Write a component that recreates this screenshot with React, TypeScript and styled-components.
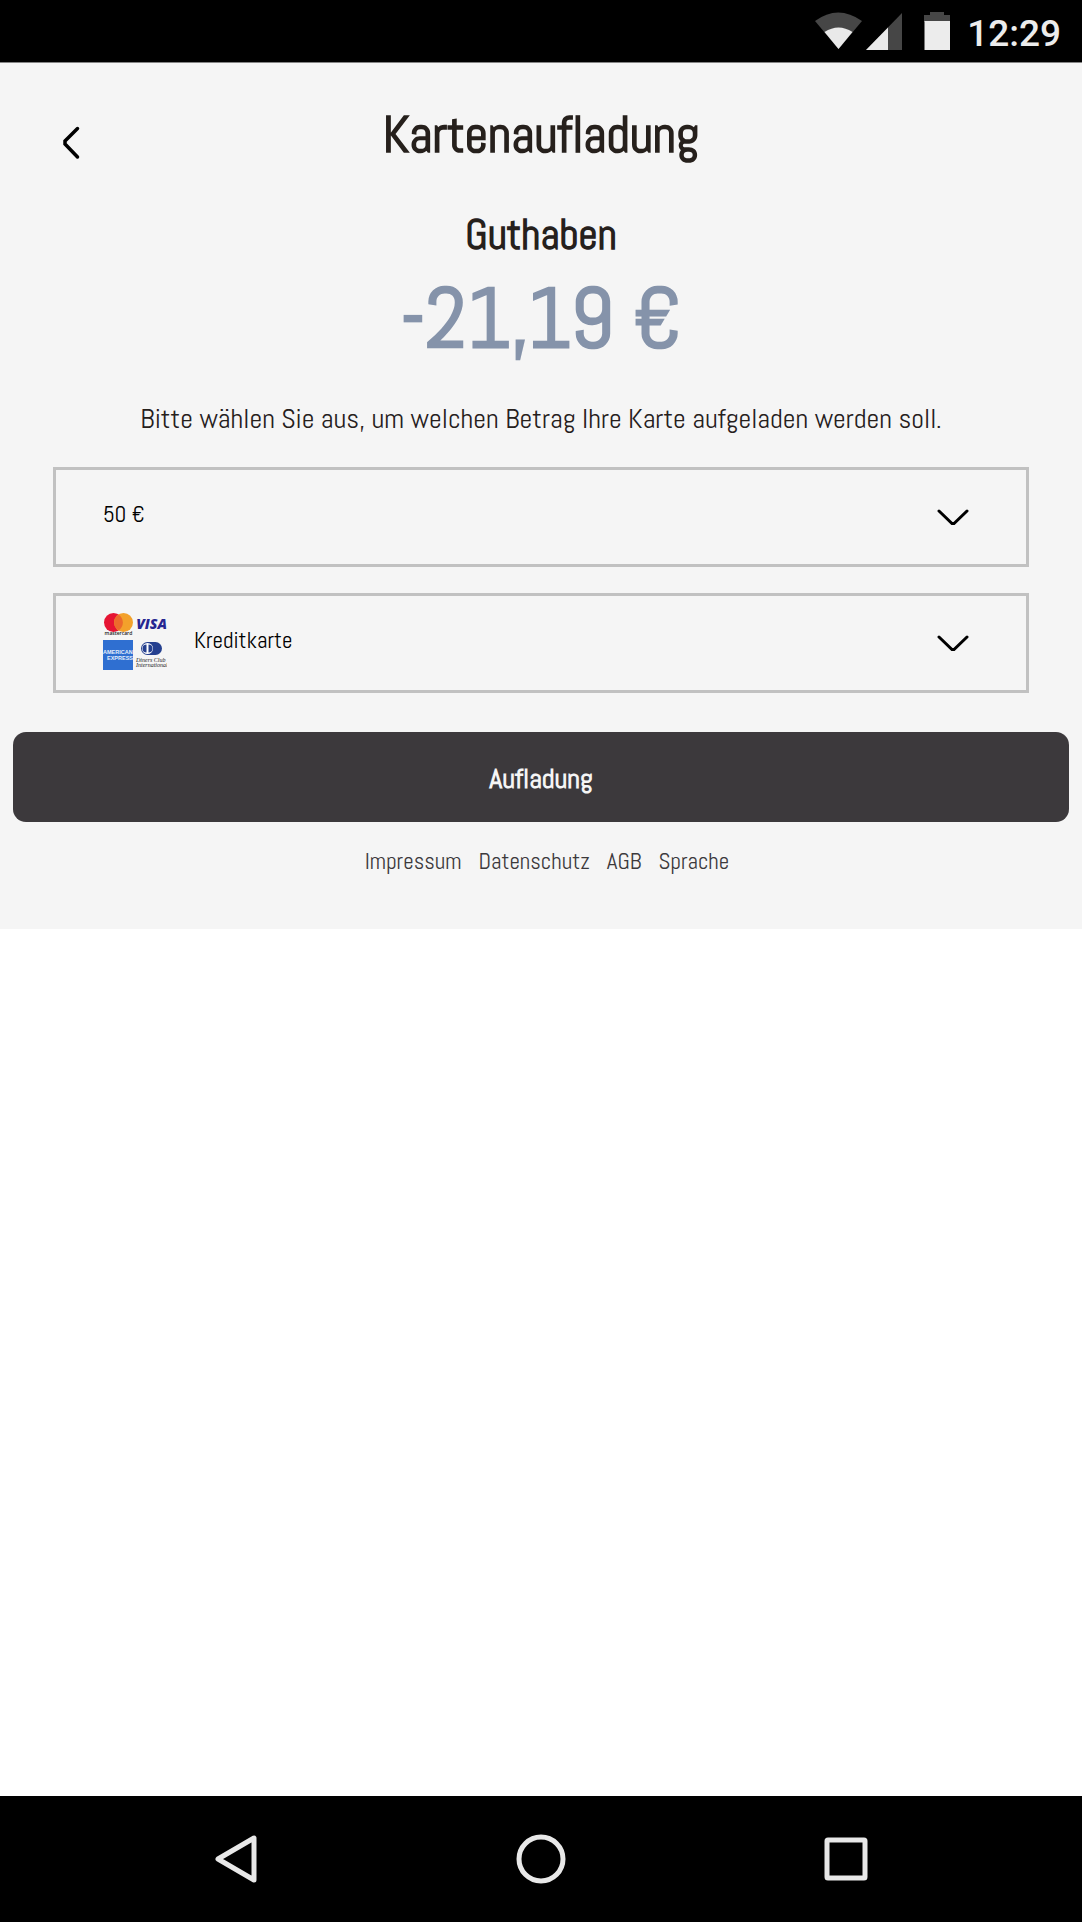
import React, { useState } from "react";
import styled, { createGlobalStyle } from "styled-components";

const GlobalStyle = createGlobalStyle`
  * { box-sizing: border-box; }
  body {
    margin: 0;
    background: #ffffff;
    font-family: "Abel", "Liberation Sans Narrow", "Roboto Condensed", "Roboto", sans-serif;
  }
  h1, h2, p { margin: 0; font-weight: 400; }
  button, select { font-family: inherit; }
`;

const Page = styled.div`
  display: flex;
  flex-direction: column;
  min-height: 100vh;
`;

const StatusBar = styled.div`
  display: flex;
  align-items: center;
  justify-content: flex-end;
  height: 63px;
  padding: 0 21px 0 0;
  background: #000000;
  border-bottom: 1px solid #858585;
`;

const Clock = styled.time`
  margin-left: 16px;
  padding-top: 6px;
  color: #ececec;
  font: 500 37px/44px "Roboto", sans-serif;
`;

const Panel = styled.main`
  display: flex;
  flex-direction: column;
  padding: 42px 13px 52px;
  background: #f5f5f5;
  color: #26201c;
  text-align: center;
`;

const Header = styled.header`
  display: grid;
  grid-template-columns: 80px 1fr 80px;
  align-items: end;
`;

const BackButton = styled.button`
  display: flex;
  align-items: center;
  justify-content: flex-start;
  height: 44px;
  padding: 0 0 0 50px;
  border: 0;
  background: none;
`;

const Title = styled.h1`
  font-size: 51px;
  font-weight: 700;
  line-height: 60px;
`;

const Subtitle = styled.h2`
  margin-top: 44px;
  font-size: 42px;
  font-weight: 700;
  line-height: 52px;
`;

const Amount = styled.p`
  margin-top: 7px;
  color: #8593aa;
  font-size: 85px;
  font-weight: 700;
  line-height: 100px;
`;

const Prompt = styled.p`
  margin-top: 31px;
  font-size: 28px;
  line-height: 40px;
`;

const Fields = styled.div`
  display: flex;
  flex-direction: column;
  gap: 26px;
  margin: 28px 40px 0;
`;

const Field = styled.div`
  position: relative;
  height: 100px;
`;

const Select = styled.select<{ $indent: number }>`
  width: 100%;
  height: 100%;
  padding: 0 120px 6px ${(p) => p.$indent}px;
  appearance: none;
  border: 3px solid #c1c1c1;
  border-radius: 0;
  background: #f5f5f5;
  color: #000000;
  font-size: 23px;
`;

const FieldArrow = styled.span`
  position: absolute;
  top: 42px;
  right: 60px;
  display: flex;
  pointer-events: none;
`;

const FieldIcon = styled.span`
  position: absolute;
  top: 20px;
  left: 50px;
  display: flex;
  pointer-events: none;
`;

const Submit = styled.button`
  height: 90px;
  margin-top: 39px;
  padding: 3px 0 0;
  border: 0;
  border-radius: 13px;
  background: #3c393c;
  color: #f5f5f5;
  font-size: 28px;
  font-weight: 700;
  line-height: 40px;
`;

const Footer = styled.footer`
  display: flex;
  justify-content: center;
  gap: 17px;
  margin-top: 23px;
  padding-left: 12px;
`;

const FooterLink = styled.a`
  color: #3c393c;
  font-size: 23px;
  line-height: 32px;
  text-decoration: none;
`;

const NavBar = styled.nav`
  display: flex;
  align-items: center;
  justify-content: center;
  gap: 245px;
  height: 126px;
  margin-top: auto;
  background: #000000;
`;

const NavButton = styled.button`
  display: flex;
  align-items: center;
  justify-content: center;
  width: 60px;
  height: 60px;
  padding: 0;
  border: 0;
  background: none;
`;

const StatusIcons = () => (
  <svg width="136" height="40" viewBox="0 0 136 40" aria-hidden="true">
    <path d="M0 10Q23 -7 47 10L23.500 38Z" fill="#464646" />
    <path d="M9.500 21Q23.500 12 37.500 21L23.500 38Z" fill="#e9e9e9" />
    <path d="M87 2V39H51Z" fill="#464646" />
    <path d="M73 16.500V39H51Z" fill="#e9e9e9" />
    <path d="M115 1H129V4H135V11H109V4H115Z" fill="#464646" />
    <path d="M109.500 10H135V39H109.500Z" fill="#ececec" />
  </svg>
);

const ArrowDown = () => (
  <svg width="32" height="17" viewBox="0 0 32 17" fill="none" aria-hidden="true">
    <path d="M2 2L15 14.500H17L30 2" stroke="#000" strokeWidth="3" strokeLinecap="round" />
  </svg>
);

const CardBrands = () => (
  <svg width="64" height="58" viewBox="0 0 64 58" aria-hidden="true">
    <circle cx="10.500" cy="9.500" r="9.500" fill="#e61433" />
    <circle cx="20.500" cy="9.500" r="9.500" fill="#f3a12b" />
    <path d="M15.500 1.500A9.500 9.500 0 0 1 15.500 17.500A9.500 9.500 0 0 1 15.500 1.500Z" fill="#ec6a2c" />
    <text x="15.500" y="22" fontSize="5" fontWeight="600" fontFamily="Open Sans, sans-serif" textAnchor="middle" fill="#222">mastercard</text>
    <text x="48.500" y="16" fontSize="14" fontWeight="800" fontStyle="italic" fontFamily="Open Sans, sans-serif" textAnchor="middle" fill="#262691">VISA</text>
    <rect x="0" y="27" width="30" height="30" fill="#2f6fd1" />
    <g fill="#e4eefb" fontFamily="Liberation Sans, sans-serif" fontWeight="700" fontSize="5.500">
      <text x="0" y="41">AMERICAN</text>
      <text x="30" y="47" textAnchor="end">EXPRESS</text>
    </g>
    <rect x="38" y="29" width="21" height="13" rx="6.500" fill="#25408f" />
    <circle cx="44.500" cy="35.500" r="5.500" fill="#fff" />
    <path d="M43.500 31.500A4 4 0 0 0 43.500 39.500ZM45.500 31.500A4 4 0 0 1 45.500 39.500Z" fill="#25408f" />
    <g fill="#222" fontFamily="Liberation Serif, serif" fontStyle="italic" fontSize="6">
      <text x="33" y="49">Diners Club</text>
      <text x="33" y="54">International</text>
    </g>
  </svg>
);

export default function App() {
  const [amount, setAmount] = useState("50 €");
  const [method, setMethod] = useState("Kreditkarte");

  return (
    <>
      <GlobalStyle />
      <Page>
        <StatusBar>
          <StatusIcons />
          <Clock>12:29</Clock>
        </StatusBar>

        <Panel>
          <Header>
            <BackButton type="button" aria-label="Zurück">
              <svg width="17" height="34" viewBox="0 0 17 34" fill="none" aria-hidden="true">
                <path d="M14.500 2.500L2 15V18L14.500 31" stroke="#000" strokeWidth="3.500" strokeLinecap="round" />
              </svg>
            </BackButton>
            <Title>Kartenaufladung</Title>
          </Header>

          <Subtitle>Guthaben</Subtitle>
          <Amount>-21,19 €</Amount>
          <Prompt id="prompt">
            Bitte wählen Sie aus, um welchen Betrag Ihre Karte aufgeladen werden soll.
          </Prompt>

          <Fields>
            <Field>
              <Select $indent={47} aria-labelledby="prompt" value={amount} onChange={(e) => setAmount(e.target.value)}>
                <option>50 €</option>
              </Select>
              <FieldArrow><ArrowDown /></FieldArrow>
            </Field>
            <Field>
              <Select $indent={138} aria-label="Zahlungsart" value={method} onChange={(e) => setMethod(e.target.value)}>
                <option>Kreditkarte</option>
              </Select>
              <FieldIcon><CardBrands /></FieldIcon>
              <FieldArrow><ArrowDown /></FieldArrow>
            </Field>
          </Fields>

          <Submit type="button">Aufladung</Submit>

          <Footer>
            <FooterLink href="#impressum">Impressum</FooterLink>
            <FooterLink href="#datenschutz">Datenschutz</FooterLink>
            <FooterLink href="#agb">AGB</FooterLink>
            <FooterLink href="#sprache">Sprache</FooterLink>
          </Footer>
        </Panel>

        <NavBar>
          <NavButton type="button" aria-label="Zurück">
            <svg width="44" height="50" viewBox="0 0 44 50" fill="none" aria-hidden="true">
              <path d="M40 4V46L4 25Z" stroke="#e8e8e8" strokeWidth="5" strokeLinejoin="round" />
            </svg>
          </NavButton>
          <NavButton type="button" aria-label="Startseite">
            <svg width="50" height="50" viewBox="0 0 50 50" fill="none" aria-hidden="true">
              <circle cx="25" cy="25" r="22" stroke="#e8e8e8" strokeWidth="5" />
            </svg>
          </NavButton>
          <NavButton type="button" aria-label="Übersicht">
            <svg width="44" height="46" viewBox="0 0 44 46" fill="none" aria-hidden="true">
              <rect x="3" y="4" width="38" height="38" rx="1" stroke="#e8e8e8" strokeWidth="5" />
            </svg>
          </NavButton>
        </NavBar>
      </Page>
    </>
  );
}
